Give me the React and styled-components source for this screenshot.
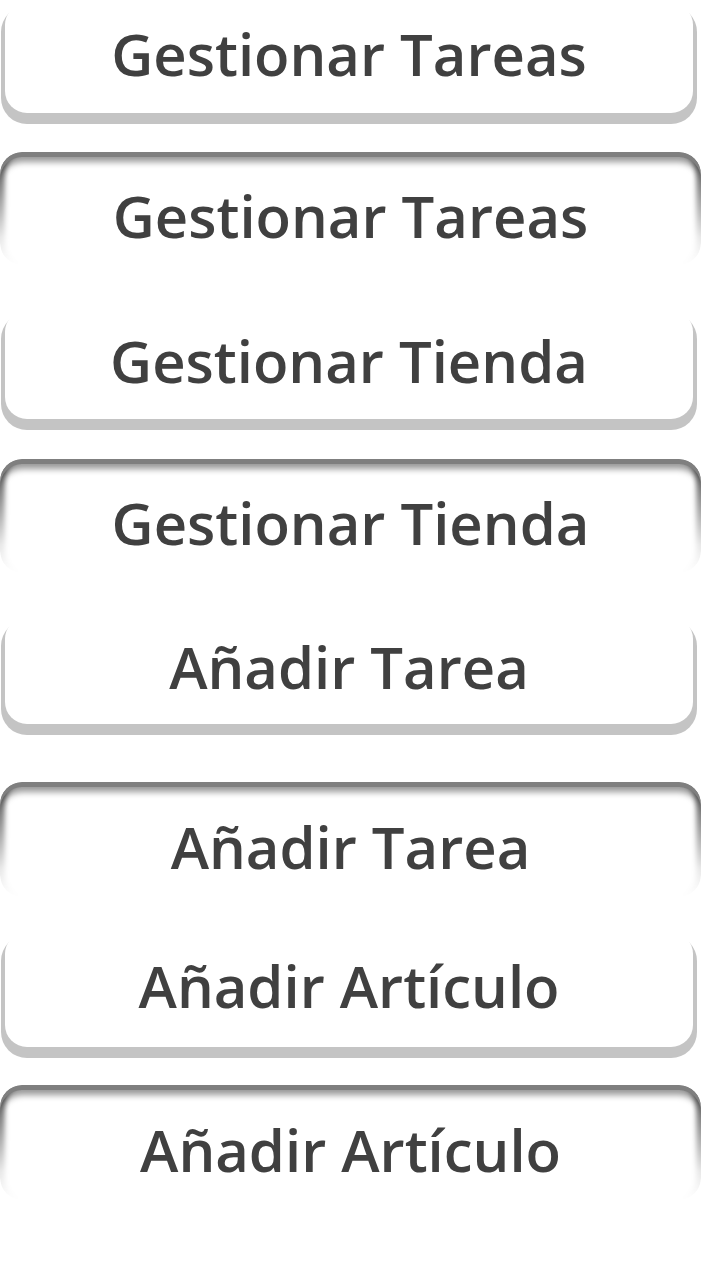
import React from "react";
import styled, { createGlobalStyle, css } from "styled-components";

const Global = createGlobalStyle`
  html, body { margin: 0; padding: 0; background: #ffffff; }
  body { font-family: "Open Sans", "Noto Sans", sans-serif; }
`;

const Stack = styled.div`
  display: flex;
  flex-direction: column;
  width: 702px;
`;

const Button = styled.div`
  position: relative;
  box-sizing: border-box;
  display: flex;
  align-items: center;
  justify-content: center;
  background: #ffffff;
  color: #404040;
  font-family: "Open Sans", "Noto Sans", sans-serif;
  font-weight: 600;
  font-size: 58px;
  line-height: 1;
  letter-spacing: 0px;
  white-space: nowrap;
  border-radius: 22px;
  margin-top: ${(p) => p.$mt}px;
  height: ${(p) => p.$h}px;

  ${(p) =>
    p.$pressed
      ? css`
          margin-right: 1px;
          padding-top: 14px;
          &::before {
            content: "";
            position: absolute;
            inset: 0;
            border-radius: inherit;
            pointer-events: none;
            box-shadow: inset 0 5px 0 #7f7f7f, inset 0 10px 6px rgba(0, 0, 0, 0.4),
              inset 7px 0 5px -2px rgba(0, 0, 0, 0.55),
              inset -7px 0 5px -2px rgba(0, 0, 0, 0.55);
            -webkit-mask-image: linear-gradient(to bottom, #000 0%, #000 12%, rgba(0,0,0,0.15) 75%, transparent 100%);
            mask-image: linear-gradient(to bottom, #000 0%, #000 12%, rgba(0,0,0,0.15) 75%, transparent 100%);
          }
        `
      : css`
          margin-left: 5px;
          margin-right: 9px;
          padding-bottom: 8px;
          box-shadow: 0 7px 0 4px #c4c4c4;
        `}
`;

const items = [
  { label: "Gestionar Tareas", pressed: false, mt: 3, h: 110 },
  { label: "Gestionar Tareas", pressed: true, mt: 39, h: 113 },
  { label: "Gestionar Tienda", pressed: false, mt: 45, h: 109 },
  { label: "Gestionar Tienda", pressed: true, mt: 40, h: 114 },
  { label: "Añadir Tarea", pressed: false, mt: 44, h: 107 },
  { label: "Añadir Tarea", pressed: true, mt: 58, h: 115 },
  { label: "Añadir Artículo", pressed: false, mt: 35, h: 115 },
  { label: "Añadir Artículo", pressed: true, mt: 38, h: 115 },
];

export default function App() {
  return (
    <>
      <Global />
      <Stack>
        {items.map((it, i) => (
          <Button key={i} $pressed={it.pressed} $mt={it.mt} $h={it.h}>
            {it.label}
          </Button>
        ))}
      </Stack>
    </>
  );
}
